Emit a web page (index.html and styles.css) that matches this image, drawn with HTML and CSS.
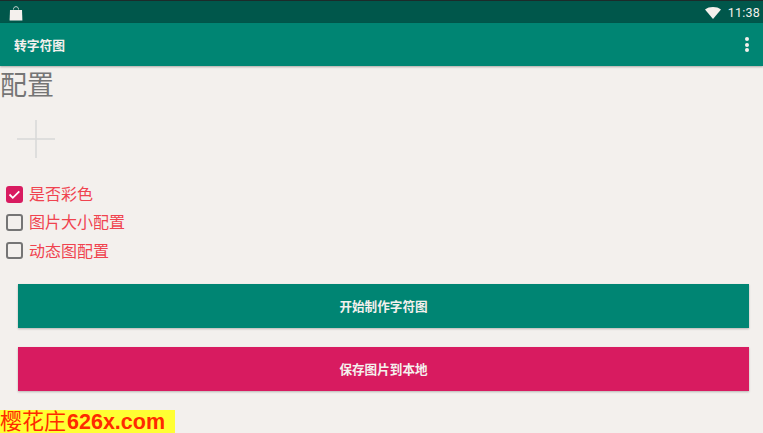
FILE: index.html
```html
<!DOCTYPE html>
<html lang="zh">
<head>
<meta charset="utf-8">
<title>转字符图</title>
<link rel="stylesheet" href="styles.css">
</head>
<body>
<div class="status">
  <svg class="bag" width="14" height="16" viewBox="0 0 14 16"><path d="M4.500 3.500C4.500 1.500 5.500 .7 7 .7s2.500 .8 2.500 2.800" fill="none" stroke="#f4f0ed" stroke-width=".8"/><path d="M1 4h12l.4 10.500H.6z" fill="#f4f0ed"/></svg>
  <span class="spacer"></span>
  <svg class="wifi" width="16" height="12" viewBox="0 0 16 12"><path d="M0 2.500C2 .8 5 0 8 0s6 .8 8 2.500L8 12z" fill="#f4f0ed"/></svg>
  <span class="time">11:38</span>
</div>
<header class="appbar">
  <span class="title">转字符图</span>
  <span class="spacer"></span>
  <span class="more"><i></i><i></i><i></i></span>
</header>
<main class="content">
  <h1 class="heading">配置</h1>
  <div class="picker">
    <svg width="38" height="38" viewBox="0 0 38 38"><path d="M19 0v38M0 19h38" stroke="#d8d8d8" stroke-width="1.500" fill="none"/></svg>
  </div>
  <ul class="options">
    <li class="option"><span class="box checked"><svg width="17" height="17" viewBox="0 0 17 17"><path d="M3.500 8.500l3.300 3.300 6.500-6.500" fill="none" stroke="#fff" stroke-width="1.800"/></svg></span>是否彩色</li>
    <li class="option"><span class="box"></span>图片大小配置</li>
    <li class="option"><span class="box"></span>动态图配置</li>
  </ul>
  <button class="action teal">开始制作字符图</button>
  <button class="action pink">保存图片到本地</button>
</main>
<div class="watermark">樱花庄<b>626x.com</b></div>
</body>
</html>
```
FILE: styles.css
```css
* { box-sizing: border-box; }
html, body { margin: 0; height: 433px; overflow: hidden; }
body {
  position: relative;
  background: #f3f0ed;
  font-family: "Roboto", "Noto Sans CJK SC", sans-serif;
}
.spacer { flex: 1; }
.status {
  height: 23px;
  background: #00574b;
  border-top: 1px solid #1c2b2a;
  display: flex;
  align-items: center;
  padding: 1px 3px 0 9px;
  color: #f4f0ed;
}
.bag { display: block; margin-top: 2px; }
.wifi { margin-right: 7px; }
.time { font-size: 12.500px; letter-spacing: .2px; }
.appbar {
  height: 43px;
  background: #008573;
  display: flex;
  align-items: center;
  padding: 0 14px;
  color: #f4f0ed;
  box-shadow: 0 1px 2px rgba(0,0,0,.3);
  position: relative;
}
.title { font-size: 12.750px; font-weight: 700; }
.more { display: flex; flex-direction: column; gap: 1.500px; }
.more i { width: 4px; height: 4px; border-radius: 50%; background: #f4f0ed; }
.content { display: flex; flex-direction: column; }
.heading {
  margin: 2px 0 0;
  height: 36px;
  font-size: 27px;
  line-height: 36px;
  font-weight: 400;
  color: #757575;
}
.picker { padding: 16px 0 0 17px; height: 75px; }
.picker svg { display: block; }
.options { list-style: none; margin: 0; padding: 0 0 0 6px; display: flex; flex-direction: column; height: 85px; }
.option {
  height: 28.500px;
  display: flex;
  align-items: center;
  gap: 6px;
  font-size: 16px;
  color: #f0434f;
}
.box {
  width: 17px;
  height: 17px;
  margin-top: 2px;
  border: 2px solid #757575;
  border-radius: 3px;
}
.box.checked { background: #d81b60; border: 0; }
.box svg { display: block; }
.action {
  display: block;
  margin: 0 14px 0 18px;
  width: 731px;
  height: 44px;
  padding: 0 0 1px;
  border: 0;
  color: #f4f0ed;
  font: 700 12.600px "Roboto", "Noto Sans CJK SC", sans-serif;
  box-shadow: 0 1px 2px rgba(0,0,0,.25);
}
.teal { background: #008573; margin-top: 20px; }
.pink { background: #d81b60; margin-top: 19px; }
.watermark {
  position: absolute;
  left: 0;
  top: 410px;
  width: 175px;
  height: 23px;
  background: #ffff33;
  color: #ff2a00;
  font-family: "Liberation Sans", "Noto Sans CJK SC", sans-serif;
  font-size: 22px;
  line-height: 24px;
  white-space: nowrap;
}
.watermark b { font-size: 21.500px; margin-left: 1px; }
```
